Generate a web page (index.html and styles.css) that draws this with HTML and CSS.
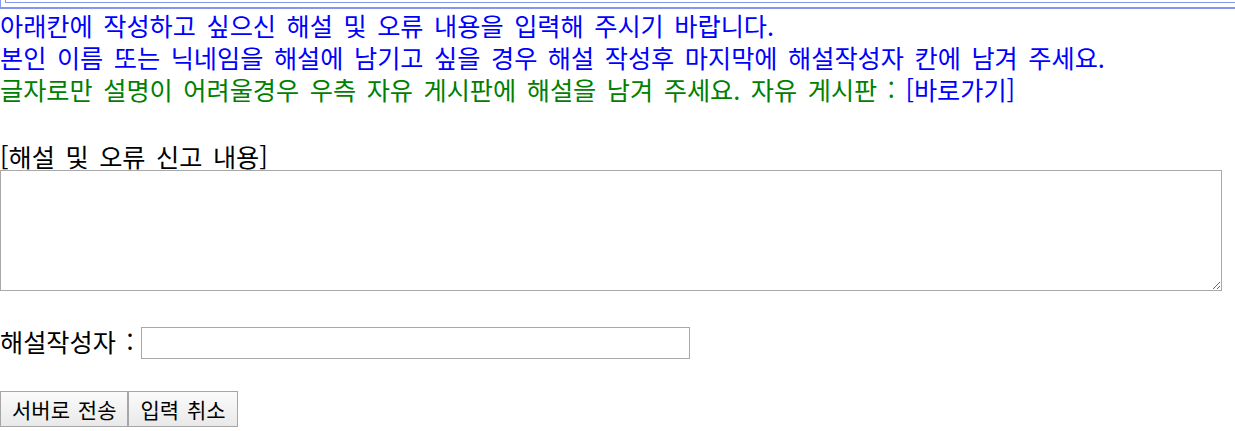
FILE: index.html
```html
<!DOCTYPE html>
<html lang="ko">
<head>
    <meta charset="UTF-8">
    <title>해설 및 오류 신고</title>
    <link rel="stylesheet" href="styles.css">
</head>
<body>
    <div class="frame">
        <div class="frame-inner"></div>
    </div>

    <div class="notice">
        <p class="blue">아래칸에 작성하고 싶으신 해설 및 오류 내용을 입력해 주시기 바랍니다.</p>
        <p class="blue">본인 이름 또는 닉네임을 해설에 남기고 싶을 경우 해설 작성후 마지막에 해설작성자 칸에 남겨 주세요.</p>
        <p class="green">글자로만 설명이 어려울경우 우측 자유 게시판에 해설을 남겨 주세요. 자유 게시판 : <a class="go-link" href="#">[바로가기]</a></p>
    </div>

    <form class="report-form" onsubmit="return false">
        <div class="field-title">[해설 및 오류 신고 내용]</div>
        <textarea class="report-text" name="content"></textarea>

        <div class="writer-row">
            <label for="writer">해설작성자 :</label>
            <input type="text" id="writer" name="writer">
        </div>

        <div class="actions">
            <button type="submit">서버로 전송</button><button type="reset">입력 취소</button>
        </div>
    </form>
</body>
</html>
```

FILE: styles.css
```css
* {
    box-sizing: border-box;
}
body {
    margin: 0;
    font-family: "Noto Sans CJK KR", "Noto Sans", sans-serif;
    font-size: 25.2px;
    word-spacing: 3.5px;
    color: #000;
    background-color: #fff;
    overflow: hidden;
}
.frame {
    height: 9px;
    border-left: 1px solid #8596ee;
    border-bottom: 2px solid #8596ee;
    padding-left: 4px;
}
.frame-inner {
    height: 3px;
    border-left: 1px solid #8596ee;
    border-bottom: 1px solid #8596ee;
}
.notice p {
    margin: 0;
    line-height: 32px;
    white-space: nowrap;
}
.blue {
    color: #0000ff;
}
.green {
    color: #008000;
}
.go-link {
    color: #0000ff;
    text-decoration: none;
}
.report-form {
    margin: 0;
}
.field-title {
    margin-top: 37px;
    line-height: 28px;
}
.report-text {
    display: block;
    margin: 0;
    width: 1222px;
    height: 121px;
    border: 1px solid #a9a9a9;
    border-radius: 0;
    padding: 2px;
    font-family: inherit;
    font-size: 16px;
}
.writer-row {
    display: flex;
    align-items: center;
    margin-top: 36px;
    height: 32px;
}
.writer-row label {
    line-height: 28px;
    margin-top: -4px;
    margin-right: 8px;
}
.writer-row input {
    width: 549px;
    height: 32px;
    border: 1px solid #a9a9a9;
    border-radius: 0;
    padding: 2px 4px;
    font-family: inherit;
    font-size: 20px;
    outline: none;
}
.actions {
    margin-top: 32px;
    display: flex;
}
.actions button {
    height: 36px;
    margin: 0;
    padding: 0 11px;
    border: 1px solid #a6a6a6;
    border-radius: 0;
    background: linear-gradient(#fbfbfb, #e9e9e9);
    font-family: inherit;
    font-size: 21px;
    word-spacing: 2px;
    color: #000;
}
```
